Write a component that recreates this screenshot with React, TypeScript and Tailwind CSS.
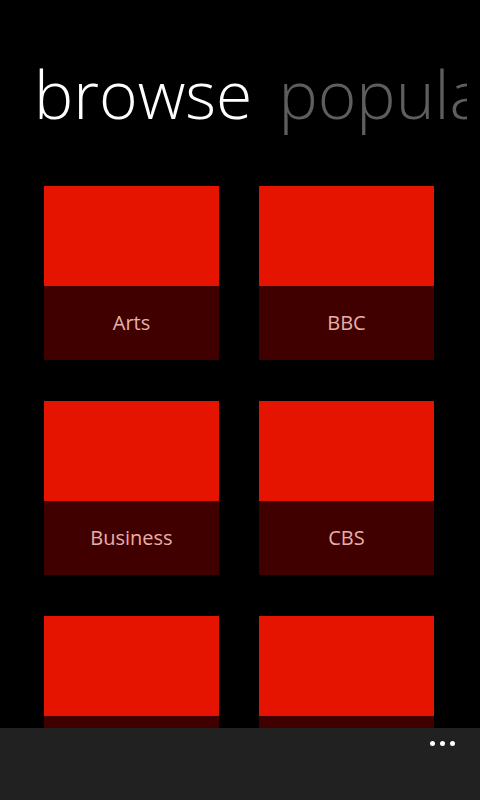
const tiles = ["Arts", "BBC", "Business", "CBS", "Comedy", "Culture"];

function Tile({ label }: { label: string }) {
  return (
    <div className="flex h-[174px] w-[175px] flex-col">
      <div className="h-[100px] bg-[#e51400]" />
      <div className="flex flex-1 items-center justify-center bg-[#400000]">
        <span className="text-[20px] text-[#e8b0a8]">{label}</span>
      </div>
    </div>
  );
}

export default function App() {
  return (
    <div
      className="relative h-[800px] w-[480px] overflow-hidden bg-black"
      style={{ fontFamily: '"Open Sans", "Noto Sans", sans-serif' }}
    >
      <div className="w-[467px] overflow-hidden pt-[45px]">
        <div className="flex gap-[26px] whitespace-nowrap pl-[34px] text-[66px] font-light leading-[96px]">
          <span className="shrink-0 text-white">browse</span>
          <span className="shrink-0 text-[#5e5e5e]">popular</span>
        </div>
      </div>

      <div className="mt-[45px] grid w-fit grid-cols-[175px_175px] gap-x-[40px] gap-y-[41px] pl-[44px]">
        {tiles.map((t) => (
          <Tile key={t} label={t} />
        ))}
      </div>

      <div className="absolute bottom-0 left-0 flex h-[72px] w-full items-start justify-end bg-[#212121] pr-[25px] pt-[13px]">
        <div className="flex gap-[5px]">
          <span className="h-[5px] w-[5px] rounded-full bg-white" />
          <span className="h-[5px] w-[5px] rounded-full bg-white" />
          <span className="h-[5px] w-[5px] rounded-full bg-white" />
        </div>
      </div>
    </div>
  );
}
